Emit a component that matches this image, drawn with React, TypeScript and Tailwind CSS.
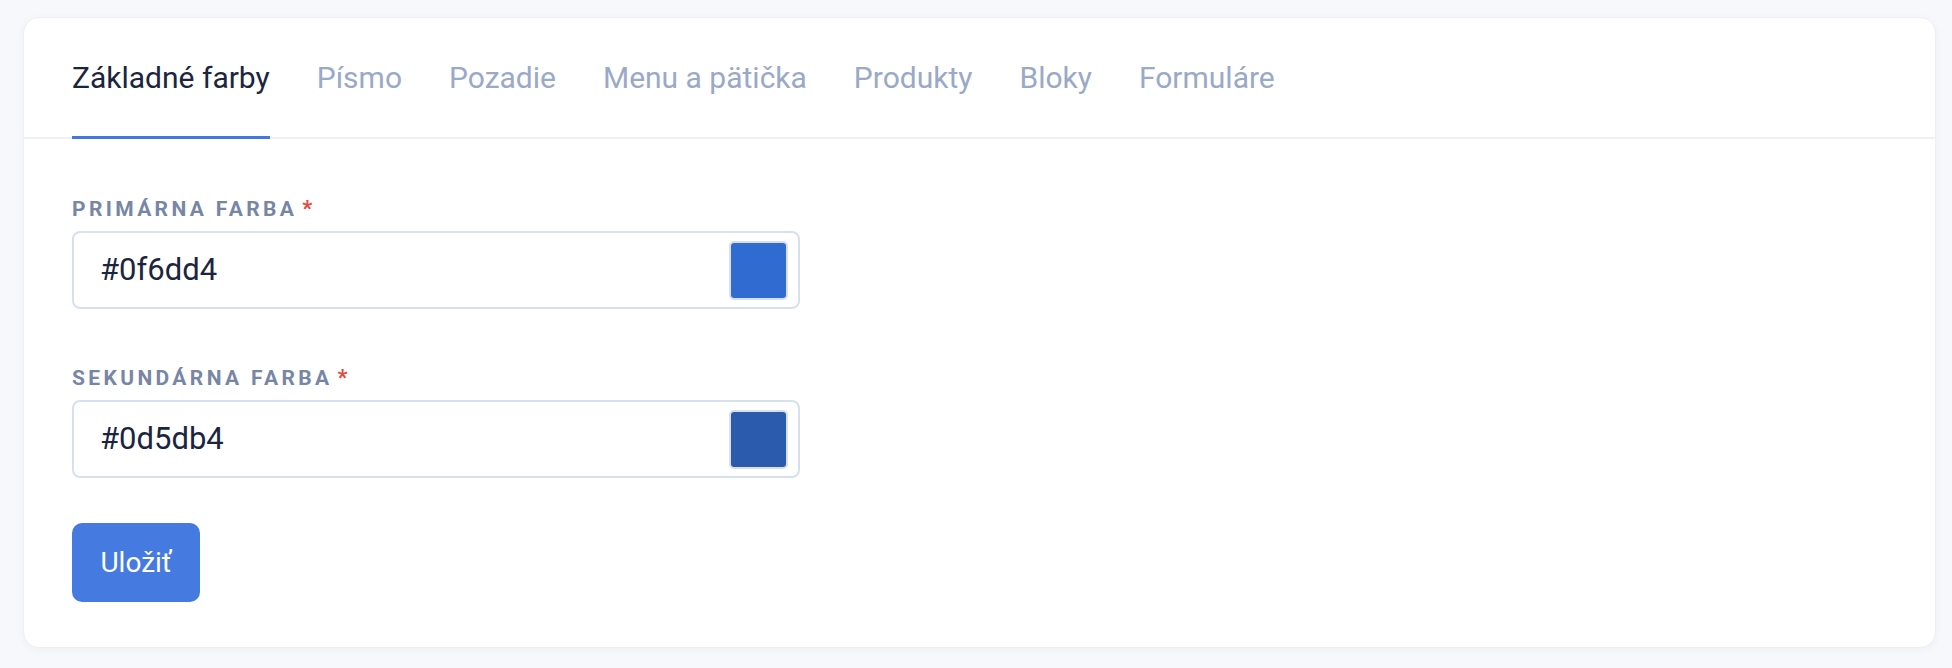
const tabs = ["Základné farby", "Písmo", "Pozadie", "Menu a pätička", "Produkty", "Bloky", "Formuláre"];

const fields = [
  { label: "Primárna farba", value: "#0f6dd4", swatch: "bg-[#2f6bd0]" },
  { label: "Sekundárna farba", value: "#0d5db4", swatch: "bg-[#2a5bad]" },
];

const App = () => {
  return (
    <div className="min-h-screen bg-[#f7f8fb] pt-[17px] pl-[23px] pr-[16px] pb-[22px] font-['Roboto',sans-serif]">
      <div className="rounded-2xl border border-[#eceff6] bg-white shadow-[0_2px_8px_rgba(30,50,100,0.04)]">
        <nav className="flex gap-[47px] px-12 border-b-2 border-[#eef1f6]">
          {tabs.map((t, i) => (
            <span
              key={t}
              className={
                i === 0
                  ? "pt-[44px] pb-[40px] -mb-[2px] text-[30px] leading-8 text-[#1b2540] border-b-[3px] border-[#4179e0]"
                  : "pt-[44px] pb-[43px] text-[30px] leading-8 text-[#9aa9c7]"
              }
            >
              {t}
            </span>
          ))}
        </nav>
        <div className="px-12 pt-[58px] pb-[45px]">
          {fields.map((f, i) => (
            <div key={f.label} className={i > 0 ? "mt-[57px]" : ""}>
              <label className="block mb-[10px] text-[21px] leading-6 font-bold uppercase tracking-[0.16em] text-[#7886a6]">
                {f.label}
                <span className="ml-[5px] text-[22px] text-[#e5483d]">*</span>
              </label>
              <div className="flex items-center justify-between w-[728px] h-[78px] rounded-lg border-2 border-[#d7e0ee] pl-[26px] pr-[10px]">
                <span className="text-[31px] text-[#1b2540]">{f.value}</span>
                <div className="w-[59px] h-[59px] rounded-[5px] border-2 border-[#d8dfea]">
                  <div className={`w-full h-full rounded-[3px] ${f.swatch}`}></div>
                </div>
              </div>
            </div>
          ))}
          <button className="mt-[45px] w-[128px] h-[79px] rounded-[10px] bg-[#457be0] text-white text-[28px]">
            Uložiť
          </button>
        </div>
      </div>
    </div>
  );
};

export default App;
